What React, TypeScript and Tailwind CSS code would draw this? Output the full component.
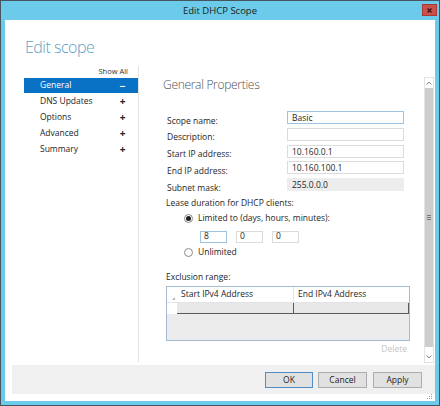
import React from "react";

const font = { fontFamily: '"Open Sans", "Noto Sans", "Liberation Sans", sans-serif' };

function Field({ label, value, variant }: { label: string; value: string; variant: "focus" | "normal" | "disabled" }) {
  const cls =
    variant === "focus"
      ? "border border-[#9fc4e2] bg-white"
      : variant === "disabled"
      ? "border border-[#ededed] bg-[#ededed]"
      : "border border-[#dcdcdc] bg-white";
  return (
    <div className="flex h-[16.75px] items-start">
      <div className="w-[121px] h-[13px] flex items-center pl-[1px] text-[8.5px] leading-[12px] text-[#1e1e1e] translate-y-[3px]">{label}</div>
      <div className={`w-[117px] h-[13px] flex items-center pl-[4px] text-[8.5px] leading-[11px] text-[#1e1e1e] ${cls}`}>{value}</div>
    </div>
  );
}

function NavRow({ label, selected, sign }: { label: string; selected?: boolean; sign: string }) {
  return (
    <div
      className={`flex items-center justify-between pl-[16px] pr-[12px] text-[8.5px] ${
        selected ? "h-[15px] bg-[#0a72c4] text-white" : "h-[16px] text-[#1e1e1e]"
      }`}
    >
      <span>{label}</span>
      <span className="w-[7px] text-center text-[10px] font-bold leading-none">{sign}</span>
    </div>
  );
}

function Radio({ checked, label }: { checked?: boolean; label: string }) {
  return (
    <div className="flex h-[12px] items-center pl-[18px] gap-[5px] text-[8.5px] text-[#1e1e1e]">
      <div className="w-[9px] h-[9px] rounded-full border border-[#8a8a8a] bg-white flex items-center justify-center">
        {checked && <div className="w-[5px] h-[5px] rounded-full bg-[#1e1e1e]" />}
      </div>
      <span>{label}</span>
    </div>
  );
}

function Btn({ label, def }: { label: string; def?: boolean }) {
  return (
    <div
      className={`h-[16px] flex items-center justify-center bg-[#e1e1e1] border text-[8.5px] text-[#1e1e1e] ${
        def ? "border-[#4f8fc9] w-[48px]" : "border-[#adadad] w-[49px]"
      }`}
    >
      {label}
    </div>
  );
}

export default function App() {
  return (
    <div className="w-[440px] h-[406px] bg-[#6ccbea] border border-[#47555e] flex flex-col" style={font}>
      {/* title bar */}
      <div className="h-[19px] grid grid-cols-[1fr_auto_1fr] items-start">
        <div />
        <div className="text-[9.5px] leading-[19px] text-[#1b1b1b]">Edit DHCP Scope</div>
        <div className="flex justify-end pr-[2px] pt-[3px]">
          <div className="w-[15px] h-[12px] bg-[#c9504b] border border-[#a33b37] flex items-center justify-center">
            <svg width="5" height="5" viewBox="0 0 5 5">
              <path d="M0.5 0.5 L4.5 4.5 M4.5 0.5 L0.5 4.5" stroke="#3a1010" strokeWidth="1.2" />
            </svg>
          </div>
        </div>
      </div>

      {/* white client area */}
      <div className="mx-[4px] h-[381px] bg-white flex flex-col">
        <div className="h-[46px] pl-[20px] pt-[16px]">
          <div className="text-[16px] leading-[22px] font-light tracking-[-0.5px] text-[#62a0c4]">Edit scope</div>
        </div>

        <div className="h-[299px] flex">
          <div className="w-[19px]" />
          {/* nav */}
          <div className="w-[115px] h-[296px] border-r border-[#e3e3e3] flex flex-col">
            <div className="h-[12px] flex items-center justify-end pr-[10px] text-[7.5px] text-[#333]">Show All</div>
            <NavRow label="General" selected sign="−" />
            <NavRow label="DNS Updates" sign="+" />
            <NavRow label="Options" sign="+" />
            <NavRow label="Advanced" sign="+" />
            <NavRow label="Summary" sign="+" />
          </div>

          {/* content */}
          <div className="flex-1 flex flex-col pl-[27px]">
            <div className="h-[45px] pt-[11px] -ml-[3px]">
              <div className="text-[12px] leading-[16px] font-light tracking-[-0.3px] text-[#505050]">General Properties</div>
            </div>
            <Field label="Scope name:" value="Basic" variant="focus" />
            <Field label="Description:" value="" variant="normal" />
            <Field label="Start IP address:" value="10.160.0.1" variant="normal" />
            <Field label="End IP address:" value="10.160.100.1" variant="normal" />
            <Field label="Subnet mask:" value="255.0.0.0" variant="disabled" />

            <div className="mt-[3px] h-[12px] flex items-center text-[8.5px] text-[#1e1e1e]">Lease duration for DHCP clients:</div>
            <div className="mt-[3px]">
              <Radio checked label="Limited to (days, hours, minutes):" />
            </div>
            <div className="mt-[6px] flex gap-[9px] pl-[34px]">
              {["8", "0", "0"].map((v, i) => (
                <div
                  key={i}
                  className={`w-[27px] h-[12px] flex items-center pl-[3px] text-[8.5px] text-[#1e1e1e] bg-white border ${
                    i === 0 ? "border-[#9fc4e2]" : "border-[#dcdcdc]"
                  }`}
                >
                  {v}
                </div>
              ))}
            </div>
            <div className="mt-[4px]">
              <Radio label="Unlimited" />
            </div>
            <div className="mt-[13px] h-[12px] flex items-center text-[8.5px] text-[#1e1e1e]">Exclusion range:</div>

            {/* table */}
            <div className="mt-[2px] w-[244px] h-[55px] border border-[#a3bcd3] bg-[#ececec] flex flex-col">
              <div className="h-[16px] bg-white flex border-b border-[#e3e3e3]">
                <div className="w-[10px] relative">
                  <svg className="absolute left-[5px] bottom-[2px]" width="3" height="3" viewBox="0 0 3 3">
                    <path d="M3 0 L3 3 L0 3 Z" fill="#b5b5b5" />
                  </svg>
                </div>
                <div className="w-[117px] border-r border-[#e3e3e3] flex items-center pl-[4px] text-[8.5px] text-[#1e1e1e]">Start IPv4 Address</div>
                <div className="flex-1 flex items-center pl-[4px] text-[8.5px] text-[#1e1e1e]">End IPv4 Address</div>
              </div>
              <div className="h-[11px] flex">
                <div className="w-[10px] bg-white" />
                <div className="w-[117px] bg-[#e8e8e8] border-b border-r border-[#5a5a5a]" />
                <div className="flex-1 bg-[#e8e8e8] border-b border-r border-[#5a5a5a]" />
              </div>
            </div>
            <div className="mt-[3px] w-[244px] h-[12px] flex items-center justify-end pr-[3px] text-[8.5px] text-[#c5c5c5]">Delete</div>
          </div>

          {/* scrollbar */}
          <div className="mt-[11px] w-[10px] h-[286px] border border-[#e3e3e3] bg-white flex flex-col">
            <div className="h-[10px] flex items-center justify-center">
              <svg width="6" height="4" viewBox="0 0 6 4">
                <path d="M0.5 3.5 L3 1 L5.5 3.5" stroke="#777" strokeWidth="0.9" fill="none" />
              </svg>
            </div>
            <div className="h-[259px] bg-[#cdcdcd] flex items-center justify-center">
              <div className="flex flex-col gap-[1px]">
                <div className="w-[4px] h-[1px] bg-[#777]" />
                <div className="w-[4px] h-[1px] bg-[#777]" />
                <div className="w-[4px] h-[1px] bg-[#777]" />
              </div>
            </div>
            <div className="flex-1" />
            <div className="h-[10px] flex items-center justify-center">
              <svg width="6" height="4" viewBox="0 0 6 4">
                <path d="M0.5 0.5 L3 3 L5.5 0.5" stroke="#777" strokeWidth="0.9" fill="none" />
              </svg>
            </div>
          </div>
          <div className="w-[1px]" />
        </div>

        {/* footer */}
        <div className="ml-[7px] h-[29px] bg-[#f0f0f0] flex justify-end items-start pt-[7px] pr-[13px] gap-[5px]">
          <Btn label="OK" def />
          <Btn label="Cancel" />
          <div className="ml-[1px]">
            <Btn label="Apply" />
          </div>
        </div>
        <div className="h-[7px] flex justify-end items-end pr-[2px] pb-[1px]">
          <svg width="6" height="6" viewBox="0 0 6 6">
            <rect x="4" y="0" width="1" height="1" fill="#a0a0a0" />
            <rect x="2" y="2" width="1" height="1" fill="#a0a0a0" />
            <rect x="4" y="2" width="1" height="1" fill="#a0a0a0" />
            <rect x="0" y="4" width="1" height="1" fill="#a0a0a0" />
            <rect x="2" y="4" width="1" height="1" fill="#a0a0a0" />
            <rect x="4" y="4" width="1" height="1" fill="#a0a0a0" />
          </svg>
        </div>
      </div>
    </div>
  );
}
